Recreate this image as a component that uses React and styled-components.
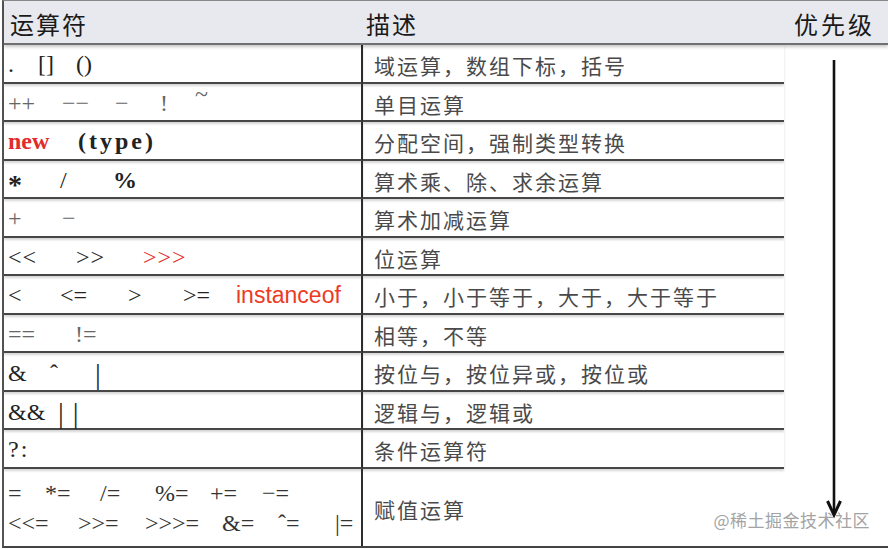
import styled, { createGlobalStyle, css } from 'styled-components';

const GlobalStyle = createGlobalStyle`
  html, body {
    margin: 0;
    padding: 0;
    background: #fff;
    overflow: hidden;
  }
  * { box-sizing: border-box; }
`;

// operator rows: each row has one or more lines of tokens
const rows = [
  { lines: [[{ t: '.', w: 30 }, { t: '[]', w: 38 }, { t: '()' }]], tone: 'dark', desc: '域运算，数组下标，括号' },
  { lines: [[{ t: '++', w: 54 }, { t: '−−', w: 53 }, { t: '−', w: 45 }, { t: '!', w: 35 }, { t: '~', raise: true }]], tone: 'light', desc: '单目运算' },
  { lines: [[{ t: 'new', w: 70, tone: 'red', bold: true }, { t: '(type)', bold: true, spacing: 3 }]], tone: 'dark', desc: '分配空间，强制类型转换' },
  { lines: [[{ t: '*', w: 52, bold: true, star: true }, { t: '/', w: 53 }, { t: '%', bold: true }]], tone: 'dark', desc: '算术乘、除、求余运算' },
  { lines: [[{ t: '+', w: 54 }, { t: '−' }]], tone: 'light', desc: '算术加减运算' },
  { lines: [[{ t: '<<', w: 68, spacing: 1 }, { t: '>>', w: 67, spacing: 1 }, { t: '>>>', tone: 'red', spacing: 1 }]], tone: 'dark', desc: '位运算' },
  { lines: [[{ t: '<', w: 52 }, { t: '<=', w: 68 }, { t: '>', w: 55 }, { t: '>=', w: 53 }, { t: 'instanceof', tone: 'sans' }]], tone: 'dark', desc: '小于，小于等于，大于，大于等于' },
  { lines: [[{ t: '==', w: 67 }, { t: '!=' }]], tone: 'light', desc: '相等，不等' },
  { lines: [[{ t: '&', w: 42 }, { t: 'ˆ', w: 45 }, { t: '|', tall: true }]], tone: 'dark', desc: '按位与，按位异或，按位或' },
  { lines: [[{ t: '&&', w: 50 }, { t: '||', tall: true, spacing: 9 }]], tone: 'dark', desc: '逻辑与，逻辑或' },
  { lines: [[{ t: '?:', spacing: 2 }]], tone: 'dark', desc: '条件运算符' },
  {
    lines: [
      [{ t: '=', w: 37 }, { t: '*=', w: 55 }, { t: '/=', w: 55 }, { t: '%=', w: 55 }, { t: '+=', w: 52 }, { t: '−=' }],
      [{ t: '<<=', w: 70 }, { t: '>>=', w: 67 }, { t: '>>>=', w: 77 }, { t: '&=', w: 56 }, { t: 'ˆ=', w: 57 }, { t: '|=' }],
    ],
    tone: 'mid',
    desc: '赋值运算',
  },
];

const tones = {
  dark: css`color: #222;`,
  mid: css`color: #333;`,
  light: css`color: #666;`,
  red: css`color: #e22b2b;`,
  sans: css`
    color: #ec3b24;
    font-family: "Liberation Sans", Arial, sans-serif;
    font-size: 23px;
  `,
};

const App = () => {
  return (
    <>
      <GlobalStyle />
      <Frame>
        <Header>
          <HeadCell>运算符</HeadCell>
          <HeadCell $pad={3}>描述</HeadCell>
          <HeadCell $right>优先级</HeadCell>
        </Header>
        <Body>
          {rows.map((row, i) => {
            const last = i === rows.length - 1;
            return [
              <OpCell key={`op${i}`} $last={last}>
                {row.lines.map((line, j) => (
                  <OpLine key={j}>
                    {line.map((tok, k) => (
                      <Tok
                        key={k}
                        $w={tok.w}
                        $tone={tok.tone || row.tone}
                        $bold={tok.bold}
                        $raise={tok.raise}
                        $tall={tok.tall}
                        $star={tok.star}
                        $spacing={tok.spacing}
                      >
                        {tok.t}
                      </Tok>
                    ))}
                  </OpLine>
                ))}
              </OpCell>,
              <DescCell key={`d${i}`} $last={last}>{row.desc}</DescCell>,
            ];
          })}
          <PriorityCol>
            <svg width="20" height="460" viewBox="0 0 20 460">
              <line x1="10" y1="0" x2="10" y2="454" stroke="#111" strokeWidth="2.6" />
              <polyline points="3.5,441 10,455 16.5,441" fill="none" stroke="#111" strokeWidth="3" strokeLinejoin="miter" />
            </svg>
          </PriorityCol>
        </Body>
        <Watermark>@稀土掘金技术社区</Watermark>
      </Frame>
    </>
  );
};

const Frame = styled.div`
margin-left: 2px;
width: 886px;
height: 548px;
border-left: 2px solid #555;
border-top: 1px solid #8a8a8a;
border-bottom: 2px solid #444;
position: relative;
display: flex;
flex-direction: column;
background: #fff;
`

const Header = styled.div`
height: 44px;
display: grid;
grid-template-columns: 359px 421px 1fr;
align-items: center;
background: #e8e9ee;
border-bottom: 2px solid #707070;
box-shadow: 0 2px 3px rgba(0, 0, 0, 0.22);
position: relative;
z-index: 1;
`

const HeadCell = styled.div`
font-family: "Noto Sans CJK SC", sans-serif;
font-size: 24px;
letter-spacing: ${p => (p.$right ? 3 : 2)}px;
color: #1a1a1a;
padding-left: ${p => (p.$pad !== undefined ? p.$pad : 6)}px;
padding-top: 2px;
text-align: ${p => (p.$right ? 'right' : 'left')};
padding-right: ${p => (p.$right ? 13 : 0)}px;
white-space: nowrap;
`

const Body = styled.div`
flex: 1;
display: grid;
grid-template-columns: 359px 421px 1fr;
grid-template-rows: repeat(11, 38.5px) 1fr;
`

const rowLine = css`
border-bottom: ${p => (p.$last ? 'none' : '2px solid #474747')};
box-shadow: ${p => (p.$last ? 'none' : '0 2px 2px rgba(0, 0, 0, 0.16)')};
`

const OpCell = styled.div`
${rowLine}
border-right: 2px solid #2e2e2e;
display: flex;
flex-direction: column;
justify-content: center;
gap: 6px;
padding-left: 4px;
padding-top: 2px;
`

const OpLine = styled.div`
display: flex;
align-items: baseline;
white-space: nowrap;
line-height: 24px;
`

const Tok = styled.span`
display: inline-block;
flex: none;
width: ${p => (p.$w ? `${p.$w}px` : 'auto')};
font-family: "Liberation Serif", "Times New Roman", serif;
font-size: 24px;
font-weight: ${p => (p.$bold ? 700 : 400)};
letter-spacing: ${p => p.$spacing || 0}px;
${p => tones[p.$tone]}
${p => p.$raise && css`transform: translateY(-9px);`}
${p => p.$tall && css`font-size: 29px; transform: translateY(3px);`}
${p => p.$star && css`font-size: 28px; transform: translateY(6px);`}
`

const DescCell = styled.div`
${rowLine}
display: flex;
align-items: center;
padding-left: 11px;
padding-top: 4px;
font-family: "Noto Sans CJK SC", sans-serif;
font-size: 21px;
letter-spacing: 2px;
color: #4a4a4a;
white-space: nowrap;
`

const PriorityCol = styled.div`
grid-column: 3;
grid-row: 1 / -1;
display: flex;
justify-content: flex-start;
padding-top: 15px;
padding-left: 40px;
`

const Watermark = styled.div`
position: absolute;
right: 18px;
bottom: 14px;
font-family: "Noto Sans CJK SC", sans-serif;
font-size: 17px;
color: #a3a3a3;
letter-spacing: 0.5px;
`

export default App;
